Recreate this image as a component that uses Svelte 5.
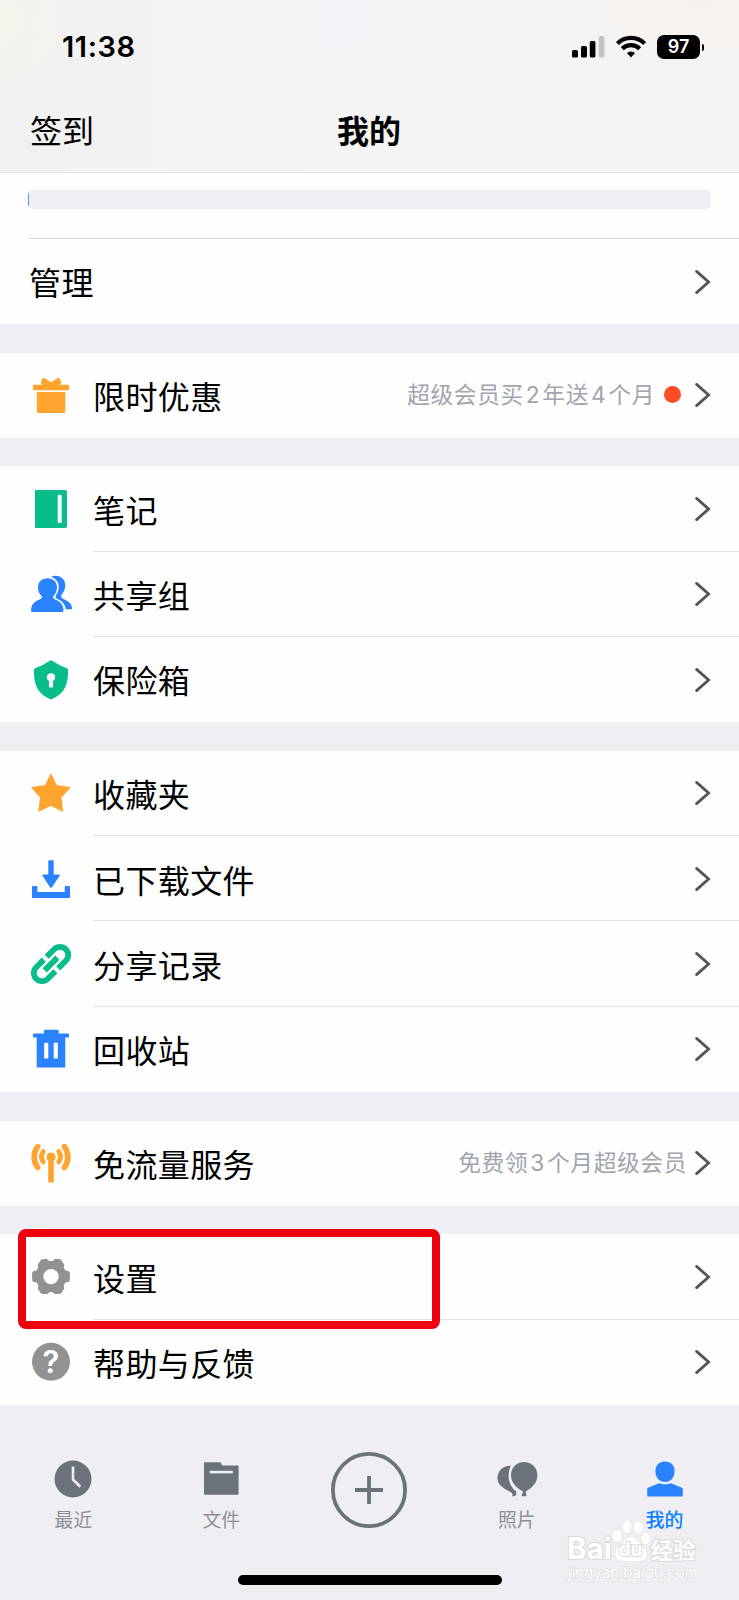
<script lang='ts'>
    type Row = {
        icon: string
        label: string
        note?: string[]
        dot?: boolean
        marked?: boolean
    }

    // odd entries in a note are digits
    const groups: Row[][] = [
        [
            { icon: 'gift', label: '限时优惠', note: ['超级会员买', '2', '年送', '4', '个月'], dot: true }
        ],
        [
            { icon: 'note', label: '笔记' },
            { icon: 'group', label: '共享组' },
            { icon: 'safe', label: '保险箱' }
        ],
        [
            { icon: 'star', label: '收藏夹' },
            { icon: 'download', label: '已下载文件' },
            { icon: 'link', label: '分享记录' },
            { icon: 'trash', label: '回收站' }
        ],
        [
            { icon: 'antenna', label: '免流量服务', note: ['免费领', '3', '个月超级会员'] }
        ],
        [
            { icon: 'gear', label: '设置', marked: true },
            { icon: 'help', label: '帮助与反馈' }
        ]
    ]

    const tabs = [
        { icon: 'recent', label: '最近' },
        { icon: 'files', label: '文件' },
        { icon: 'add', label: '' },
        { icon: 'photos', label: '照片' },
        { icon: 'me', label: '我的' }
    ]

    const active = 'me'
</script>

{#snippet chevron()}
    <svg class='chevron' viewBox='0 0 16 26' width='16' height='26'>
        <path d='M1.6 2.4 13.6 13 1.6 23.6' />
    </svg>
{/snippet}

{#snippet rowIcon(name: string)}
    <svg class='icon {name}-icon' viewBox='0 0 42 42' width='42' height='42'>
        {#if name === 'gift'}
            <rect x='3' y='10.7' width='36' height='5.5' rx='1' />
            <path d='M6.8 18H35.3V37.8Q35.3 39 34 39H8Q6.8 39 6.8 37.8Z' />
            <path d='M10.7 8.4 12.4 4.6Q13 3.4 14.3 4L21 8.2 27.8 4Q29.1 3.4 29.7 4.6L31.4 8.4 30 11H12Z' />
        {:else if name === 'note'}
            <path d='M5 2H35Q37 2 37 4V38Q37 40 35 40H6Q5 40 5 39Z' />
            <rect class='hole' x='27.7' y='6.7' width='4' height='28.4' rx='1' />
        {:else if name === 'group'}
            <path d='M21 3.8C27 1 35.3 4 35.3 12.5 35.3 17 33 19.8 31.4 22 30.6 24.4 32 25.2 34.5 26.6 39 28.6 42 31.5 42 35.5Q42 36.3 41 36.3H36C34.8 31 32.5 28.5 27.5 26.3 24.5 25 25.5 22.5 27.5 19.5 30.5 13.5 28.6 6.5 21 3.8Z' />
            <path class='front' d='M17.5 5.2C23.2 5.2 27 9 27 14.2 27 18.5 25.2 21 23.4 23 22.4 25.4 24.4 26.3 26.8 27.2 31 29 33.5 32.5 33.5 37.6Q33.5 38.9 32.2 38.9H2.2Q1 38.9 1 37.6C1 32.5 3.6 29 8 27.2 10.4 26.3 12.5 25.4 11.6 23 9.6 21 8 18.5 8 14.2 8 9 11.8 5.2 17.5 5.2Z' />
        {:else if name === 'safe'}
            <path d='M19.8 1.7Q21 1 22.2 1.7 29 6.3 36.8 9.2 38 9.6 38 10.8C38.6 25 34.5 34.8 22.2 40Q21 40.6 19.8 40C7.5 34.8 3.4 25 4 10.8Q4 9.6 5.2 9.2 13 6.3 19.8 1.7Z' />
            <circle class='hole' cx='21' cy='18.3' r='4.1' />
            <rect class='hole' x='19' y='19' width='4' height='9.6' rx='1.2' />
        {:else if name === 'star'}
            <path d='M20.9 2.5 26.3 13.8 39.7 15.6 30.8 25.3 32.4 38.9 20.9 33.1 9 38.9 10.8 25.3 2 15.6 15.5 13.8Z' />
        {:else if name === 'download'}
            <path d='M18.3 3.2Q18.3 2.2 19.3 2.2H22.7Q23.7 2.2 23.7 3.2V16.6H29.2Q30.3 16.8 29.6 17.8L21.8 29.4Q21 30.3 20.2 29.4L12.4 17.8Q11.8 16.8 12.9 16.6H18.3Z' />
            <path d='M2 28.9Q2 27.9 3 27.9H6.4Q7.4 27.9 7.4 28.9V34H34.7V28.9Q34.7 27.9 35.7 27.9H39Q40 27.9 40 28.9V39Q40 40 39 40H3Q2 40 2 39Z' />
        {:else if name === 'link'}
            <g transform='translate(21 21) rotate(-45)'>
                <path d='M2-8.2H12.7A8.2 8.2 0 0 1 12.7 8.2H2' />
                <path d='M-2-8.2H-12.7A8.2 8.2 0 0 0-12.7 8.2H-2' />
                <path d='M-9 0H9' />
            </g>
        {:else if name === 'trash'}
            <path d='M14 3Q14 1.8 15.2 1.8H27.5Q28.7 1.8 28.7 3V5.6H38Q39 5.6 39 6.6V8.6Q39 9.6 38 9.6H35.3V38.4Q35.3 39.6 34 39.6H8Q6.7 39.6 6.7 38.4V9.6H4Q3 9.6 3 8.6V6.6Q3 5.6 4 5.6H14Z' />
            <rect class='hole' x='14.1' y='14.8' width='4.2' height='15.7' rx='1' />
            <rect class='hole' x='23.7' y='14.8' width='4.2' height='15.7' rx='1' />
        {:else if name === 'antenna'}
            <circle class='solid' cx='21' cy='15' r='4.6' />
            <rect class='solid' x='18.2' y='15' width='5.6' height='25.4' rx='1' />
            <path d='M7.6 4.6A17.4 17.4 0 0 0 7.6 25.4M34.4 4.6A17.4 17.4 0 0 1 34.4 25.4' />
            <path class='inner' d='M13.3 9.6A8.9 8.9 0 0 0 13.3 19.9M28.7 9.6A8.9 8.9 0 0 1 28.7 19.9' />
        {:else if name === 'gear'}
            <path d='M10.7 4.2Q11.2 3.4 12.2 3.3L16.6 2.8Q17.6 2.9 18.2 4.2 21 6 23.8 4.2 24.4 2.9 25.4 2.8L29.8 3.3Q30.8 3.4 31.3 4.2L34.2 8.4Q34.4 9.6 33.7 10.8 34 14.2 37.3 15.1 38.9 15 39.5 16 40.5 20.6 39.5 25.2 38.9 26.2 37.3 26.1 34 27 33.7 30.4 34.4 31.6 34.2 32.8L31.3 37Q30.8 37.8 29.8 37.9H25.4Q24.4 37.9 23.8 36.9 21 35.2 18.2 36.9 17.6 37.9 16.6 37.9H12.2Q11.2 37.8 10.7 37L7.8 32.8Q7.6 31.6 8.3 30.4 8 27 4.7 26.1 3.1 26.2 2.5 25.2 1.5 20.6 2.5 16 3.1 15 4.7 15.1 8 14.2 8.3 10.8 7.6 9.6 7.8 8.4Z' />
            <circle class='hole' cx='21' cy='20.6' r='7.7' />
        {:else if name === 'help'}
            <circle cx='21' cy='20.8' r='19' />
            <text x='21' y='32' text-anchor='middle'>?</text>
        {/if}
    </svg>
{/snippet}

{#snippet tabIcon(name: string)}
    {#if name === 'add'}
        <svg class='add' viewBox='0 0 76 76' width='76' height='76'>
            <circle cx='38' cy='38' r='36.1' />
            <path d='M38 24V52M24 38H52' />
        </svg>
    {:else}
        <svg class='tab-icon' viewBox='0 0 42 40' width='42' height='40'>
            {#if name === 'recent'}
                <circle cx='21' cy='20' r='18.5' />
                <path class='line' d='M21 7.6V20.5L28.3 27.7' />
            {:else if name === 'files'}
                <path d='M4 4.2Q4 3.3 5 3.3H20.5L22.2 6.6H37.7Q38.6 6.6 38.6 7.5V34.7Q38.6 35.7 37.6 35.7H5Q4 35.7 4 34.7Z' />
                <path class='line' d='M9.8 13.1H32.8' />
            {:else if name === 'photos'}
                <path d='M14.8 6.8C7.5 6.3 1.5 11.8 1.5 19 1.5 25.8 7.2 29.2 13.6 32.5 16.5 34 17 35 16 37.6L20.2 36.3V32.2L17.5 30.3C11 22 12 13.5 14.8 6.8Z' />
                <path d='M28 3C20.6 3 15 8.8 15 16.2 15 23 19.8 28.4 25.4 31.4L27 32.8 25.4 37.2H30.6L29.6 32.8 31.2 31.4C36.8 28.4 41.4 23 41.4 16.2 41.4 8.8 35.6 3 28 3Z' />
            {:else}
                <path d='M21 2.4C26.8 2.4 30.6 6.2 30.6 12 30.6 18.4 26.6 23 21 23S11.4 18.4 11.4 12C11.4 6.2 15.2 2.4 21 2.4Z' />
                <path d='M15.2 24.3Q21 26.6 26.8 24.3L37.5 28.6Q38.8 29.2 38.8 30.5V36.5Q38.8 37.5 37.8 37.5H4.2Q3.2 37.5 3.2 36.5V30.5Q3.2 29.2 4.5 28.6Z' />
            {/if}
        </svg>
    {/if}
{/snippet}

<div class='screen'>
    <header>
        <div class='status'>
            <span class='time'>11:38</span>
            <div class='indicators'>
                <svg viewBox='0 0 33 24' width='33' height='24'>
                    <rect x='0' y='15' width='6' height='7.6' rx='1.6' />
                    <rect x='9' y='11' width='6' height='11.6' rx='1.6' />
                    <rect x='17.8' y='6' width='5.6' height='16.6' rx='1.6' />
                    <rect class='faint' x='26.8' y='1' width='5.6' height='21.6' rx='1.6' />
                </svg>
                <svg class='wifi' viewBox='0 0 32 24' width='32' height='24'>
                    <path d='M2.4 8.4A19.4 19.4 0 0 1 29.6 8.4' />
                    <path d='M7.3 13.7A12.6 12.6 0 0 1 24.7 13.7' />
                    <path class='tip' d='M12 18.1A5.7 5.7 0 0 1 20 18.1L16 22.4Z' />
                </svg>
                <div class='battery'>97</div>
            </div>
        </div>
        <nav>
            <span>签到</span>
            <h1>我的</h1>
            <span></span>
        </nav>
    </header>

    <section class='storage'>
        <div class='track'><div class='used'></div></div>
        <div class='manage'>
            <span class='label'>管理</span>
            {@render chevron()}
        </div>
    </section>

    {#each groups as rows}
        <section class='group'>
            {#each rows as row}
                <div class='row'>
                    {@render rowIcon(row.icon)}
                    <div class='content'>
                        <span class='label'>{row.label}</span>
                        {#if row.note}
                            <span class='note'>{#each row.note as part, i}<span class:digit={i % 2 === 1}>{part}</span>{/each}</span>
                        {/if}
                        {#if row.dot}
                            <i class='dot'></i>
                        {/if}
                        {@render chevron()}
                    </div>
                    {#if row.marked}
                        <div class='mark'></div>
                    {/if}
                </div>
            {/each}
        </section>
    {/each}

    <footer>
        <div class='tabs'>
            {#each tabs as tab}
                <div class='tab' class:active={tab.icon === active}>
                    {@render tabIcon(tab.icon)}
                    {#if tab.label}
                        <span>{tab.label}</span>
                    {/if}
                </div>
            {/each}
        </div>
        <div class='home'></div>
    </footer>

    <div class='watermark'>
        <div class='brand'>
            <span class='bai'>Bai</span>
            <span class='paw'>
                <svg viewBox='0 0 40 44' width='40' height='44'>
                    <ellipse cx='6.2' cy='17' rx='4.8' ry='6.2' />
                    <ellipse cx='16' cy='7.6' rx='4.8' ry='6.6' />
                    <ellipse cx='27.4' cy='8.4' rx='4.8' ry='6.4' />
                    <ellipse cx='34.4' cy='19.4' rx='4.8' ry='6.2' />
                    <path d='M20 18C26 18 29 25 33 29 38.5 34 36 42.4 28 42.4 23 42.4 17 42.4 12 42.4 4 42.4 2 34 6.5 29 11 25 14 18 20 18Z' />
                </svg>
                <b>du</b>
            </span>
            <span class='jingyan'>经验</span>
        </div>
        <div class='site'>jingyan.baidu.com</div>
    </div>
</div>

<style>
    :global(body) {
        margin: 0;
        background: #eeeef3;
    }

    .screen {
        position: relative;
        display: flex;
        flex-direction: column;
        width: 739px;
        height: 1600px;
        overflow: hidden;

        font-family: Inter, 'Noto Sans CJK SC', sans-serif;
        color: #000;
        background: #eeeef3;
    }

    svg {
        display: block;
        flex: none;
    }

    header {
        box-sizing: border-box;
        height: 173px;

        border-bottom: 1px solid #e6e6e8;
        background:
            radial-gradient(circle at 0 20px, #f4f3ec, #f4f3ec00 100px),
            radial-gradient(circle at 340px 20px, #f1f3f7, #f1f3f700 110px),
            radial-gradient(ellipse 190px 100px at 700px 0, #f7f1ed, #f7f1ed00),
            linear-gradient(90deg, #f1f1f1, #f4f4f4 50%);
    }

    .status {
        display: flex;
        justify-content: space-between;
        align-items: center;

        height: 94px;
        padding: 0 39px 0 62px;
    }

    .time {
        margin-top: -1px;

        font-size: 29px;
        font-weight: 600;
        letter-spacing: .6px;
    }

    .indicators {
        display: flex;
        align-items: center;
        gap: 10px;
    }

    .faint {
        fill: #c4c4c4;
    }

    .wifi {
        fill: none;
        stroke: #000;
        stroke-width: 4.2;
    }

    .wifi .tip {
        fill: #000;
        stroke: none;
    }

    .battery {
        position: relative;

        width: 43px;

        border-radius: 7px;

        font-size: 18px;
        font-weight: 600;
        line-height: 24px;
        text-align: center;
        color: #fff;
        background: #000;
    }

    .battery::after {
        content: '';

        position: absolute;
        top: 9px;
        right: -4px;

        width: 2.4px;
        height: 7px;

        border-radius: 0 3px 3px 0;
        background: #000;
    }

    nav {
        display: grid;
        grid-template-columns: 1fr auto 1fr;
        align-items: center;

        height: 75px;
        padding: 0 30px;

        font-size: 32px;
        line-height: 48px;
    }

    h1 {
        margin: 0 1px 0 0;
        font-size: 32px;
        font-weight: 700;
    }

    .storage {
        height: 151.2px;
        padding-left: 28px;
        background: #fefefe;
    }

    .track {
        height: 19px;
        margin: 0 28px 0 0;
        border-radius: 5px;
        overflow: hidden;
        background: #eeeef3;
        position: relative;
        top: 17px;
    }

    .used {
        width: 1px;
        height: 100%;
        background: #5b9bd5;
    }

    .manage {
        display: flex;
        align-items: center;
        justify-content: space-between;

        box-sizing: border-box;
        height: 86px;
        margin-top: 46px;
        padding-right: 28px;

        border-top: 1px solid #d9d9dc;
    }

    .label {
        padding-top: 6.5px;

        font-size: 32px;
        line-height: 48px;
        letter-spacing: .4px;
        white-space: nowrap;
    }

    .manage .label {
        padding: 5.5px 0 0 1px;
    }

    .group {
        margin-top: 28.44px;
        background: #fefefe;
    }

    .row {
        position: relative;

        display: flex;
        align-items: center;

        height: 85.33px;
        padding-left: 30px;
    }

    .content {
        flex: 1;
        display: flex;
        align-items: center;

        box-sizing: border-box;
        height: 100%;
        margin-left: 21px;
        padding-right: 28px;

        border-bottom: 1px solid #e3e3e5;
    }

    .row:last-child .content {
        border-bottom-color: transparent;
    }

    .content .chevron {
        margin: 1px 0 0 auto;
    }

    .chevron {
        fill: none;
        stroke: #555;
        stroke-width: 2.8;
        stroke-linecap: round;
    }

    .note {
        margin: -2px 0 0 auto;

        font-size: 22.7px;
        letter-spacing: .65px;
        white-space: nowrap;
        color: #a0a5ad;
    }

    .content .note + .chevron {
        margin-left: 8px;
    }

    .digit {
        padding: 0 2px;
    }

    .dot {
        width: 17px;
        height: 17px;
        margin-left: 9px;
        border-radius: 50%;
        background: #ff4d23;
    }

    .content .dot + .chevron {
        margin-left: 14px;
    }

    .gift-icon,
    .star-icon {
        fill: #ffa52f;
    }

    .star-icon {
        stroke: #ffa52f;
        stroke-width: 1.4;
        stroke-linejoin: round;
    }

    .note-icon,
    .safe-icon {
        fill: #08bd89;
    }

    .group-icon,
    .download-icon,
    .trash-icon {
        fill: #2a82ff;
    }

    .group-icon .front {
        stroke: #fefefe;
        stroke-width: 2.4;
        paint-order: stroke;
    }

    .link-icon {
        fill: none;
        stroke: #08bd89;
        stroke-width: 5.8;
    }

    .antenna-icon {
        fill: none;
        stroke: #ffa52f;
        stroke-width: 5.6;
        stroke-linecap: round;
    }

    .antenna-icon .inner {
        stroke-width: 4.8;
    }

    .antenna-icon .solid {
        fill: #ffa52f;
        stroke: none;
    }

    .gear-icon,
    .help-icon {
        fill: #929292;
    }

    .help-icon text {
        font-size: 31px;
        font-weight: 600;
        fill: #fff;
    }

    .hole {
        fill: #fefefe;
    }

    /* red frame round the settings row */
    .mark {
        position: absolute;
        top: -5px;
        left: 18px;
        z-index: 1;

        box-sizing: border-box;
        width: 422px;
        height: 100px;

        border: 8px solid #ee000f;
        border-radius: 8px;
    }

    footer {
        flex: 1;
        display: flex;
        flex-direction: column;
        align-items: center;
    }

    .tabs {
        display: flex;
        width: 100%;
        height: 170px;
    }

    .tab {
        flex: 1;
        display: flex;
        flex-direction: column;
        align-items: center;

        padding-top: 53px;

        font-size: 18.8px;
        line-height: 28px;
        color: #8f8f96;
    }

    .tab span {
        margin: 9px 1px 0 0;
    }

    .tab-icon {
        margin: 1px 1px -1px 0;
        fill: #6b7379;
    }

    .tab-icon .line {
        fill: none;
        stroke: #eeeef3;
        stroke-width: 2.6;
        stroke-linejoin: round;
    }

    .add {
        margin-top: -6px;
        fill: none;
        stroke: #6b7379;
        stroke-width: 3.8;
    }

    .active {
        font-weight: 500;
        color: #0a7fff;
    }

    .active .tab-icon {
        fill: #2a82ff;
    }

    .home {
        width: 264px;
        height: 10px;
        border-radius: 5px;
        background: #000;
    }

    .watermark {
        position: absolute;
        left: 567px;
        top: 1519px;

        width: 134px;

        color: #fff;
        -webkit-text-stroke: 2px #d9d9de;
        paint-order: stroke fill;
    }

    .brand {
        display: flex;
        align-items: flex-end;
        height: 44px;
    }

    .bai {
        font-size: 29.5px;
        font-weight: 700;
        line-height: 30px;
    }

    .paw {
        position: relative;
        margin-left: -1px;
    }

    .paw svg {
        fill: #fff;
        stroke: #d9d9de;
        stroke-width: 1;
    }

    .paw b {
        position: absolute;
        left: 8px;
        top: 20px;

        font-size: 19px;
        line-height: 22px;
    }

    .jingyan {
        font-size: 22.5px;
        font-weight: 700;
        line-height: 25px;
    }

    .site {
        margin-left: 1px;

        font-size: 15px;
        line-height: 20px;
        white-space: nowrap;
        -webkit-text-stroke-width: 1px;
    }
</style>
